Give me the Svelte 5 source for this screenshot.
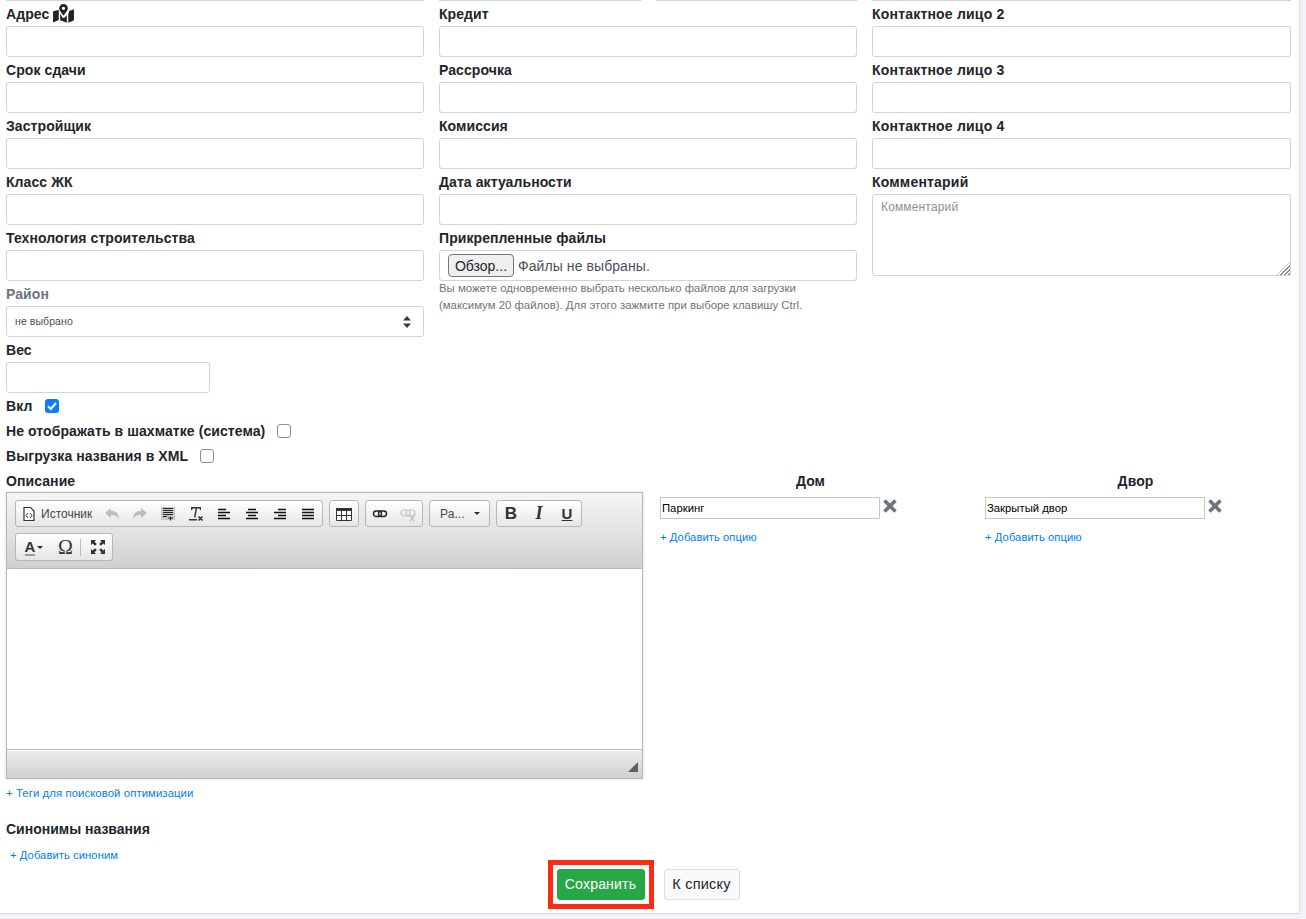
<script>
  const col1 = ['Срок сдачи', 'Застройщик', 'Класс ЖК', 'Технология строительства']
  const col2 = ['Рассрочка', 'Комиссия', 'Дата актуальности']
  const col3 = ['Контактное лицо 2', 'Контактное лицо 3', 'Контактное лицо 4']
  const options = [
    { title: 'Дом', value: 'Паркинг' },
    { title: 'Двор', value: 'Закрытый двор' }
  ]
</script>

<div class="page">
  <div class="card">
    <div class="top-edge">
      <i></i>
      <div class="split"><i></i><i></i></div>
      <i></i>
    </div>

    <div class="fields">
      <div class="col">
        <div class="field">
          <label for="addr">Адрес
            <svg class="map-icon" viewBox="0 0 22 20" width="21" height="19">
              <path fill="#212529" d="M11 0a4.6 4.6 0 0 0-4.6 4.6c0 2.1 2.9 5.6 4 6.9.3.3.9.3 1.2 0 1.1-1.3 4-4.8 4-6.9A4.6 4.6 0 0 0 11 0zm0 6.3a1.7 1.7 0 1 1 0-3.4 1.7 1.7 0 0 1 0 3.4z" />
              <path fill="#212529" d="M0 8.2v11.3l6-2.6V6.3L1 7.3c-.6.2-1 .4-1 .9zM7.5 10v7l7 2.800v-8l-2.300 2.400c-.7.6-1.700.6-2.400 0zM16 10.700v9.100l5.200-2.300c.5-.2.800-.5.800-1V5.500l-5 1.900z" />
            </svg>
          </label>
          <input id="addr" type="text" />
        </div>
        {#each col1 as name}
          <div class="field">
            <label for={name}>{name}</label>
            <input id={name} type="text" />
          </div>
        {/each}
        <div class="field">
          <label class="muted" for="district">Район</label>
          <div class="select" id="district">
            <span>не выбрано</span>
            <svg viewBox="0 0 8 12" width="8" height="12"><path fill="#343a40" d="M4 0 8 4.500H0zM4 12 0 7.500h8z" /></svg>
          </div>
        </div>
        <div class="field">
          <label for="weight">Вес</label>
          <input id="weight" class="short" type="text" />
        </div>
        <div class="check-row">
          <b>Вкл</b>
          <span class="box on">
            <svg viewBox="0 0 14 14" width="14" height="14"><path d="M3 7.300 5.800 10 11 4" fill="none" stroke="#fff" stroke-width="2" /></svg>
          </span>
        </div>
        <div class="check-row"><b>Не отображать в шахматке (система)</b><span class="box"></span></div>
        <div class="check-row"><b>Выгрузка названия в XML</b><span class="box"></span></div>
      </div>

      <div class="col">
        <div class="field">
          <label for="credit">Кредит</label>
          <input id="credit" type="text" />
        </div>
        {#each col2 as name}
          <div class="field">
            <label for={name}>{name}</label>
            <input id={name} type="text" />
          </div>
        {/each}
        <div class="field">
          <label for="files">Прикрепленные файлы</label>
          <div class="file" id="files">
            <button type="button">Обзор...</button>
            <span>Файлы не выбраны.</span>
          </div>
          <p class="hint">Вы можете одновременно выбрать несколько файлов для загрузки (максимум 20 файлов). Для этого зажмите при выборе клавишу Ctrl.</p>
        </div>
      </div>

      <div class="col contacts">
        {#each col3 as name}
          <div class="field">
            <label for={name}>{name}</label>
            <input id={name} type="text" />
          </div>
        {/each}
        <div class="field">
          <label for="note">Комментарий</label>
          <div class="note-wrap">
            <textarea id="note" placeholder="Комментарий"></textarea>
          </div>
        </div>
      </div>
    </div>

    <div class="lower">
      <div class="descr">
        <div class="descr-label"><b>Описание</b></div>
        <div class="editor">
          <div class="toolbar">
            <div class="tools">
              <div class="group">
                <span class="src">
                  <svg viewBox="0 0 16 16" width="16" height="16">
                    <path fill="#fff" stroke="#333" stroke-width="1.2" d="M3 1.500h6.500L13 5v9.500H3z" />
                    <path fill="none" stroke="#333" d="M7 7 5 9.500 7 12M9 7l2 2.500L9 12" />
                  </svg>
                  Источник
                </span>
                <span class="tool off"><svg viewBox="0 0 16 16" width="16" height="16"><path fill="#474747" d="M1 7l6-5v3c5 0 8 2.500 8 8-1.500-3-4-4-8-4v3z" /></svg></span>
                <span class="tool off"><svg viewBox="0 0 16 16" width="16" height="16"><path fill="#474747" d="M15 7 9 2v3c-5 0-8 2.500-8 8 1.500-3 4-4 8-4v3z" /></svg></span>
                <span class="tool"><svg viewBox="0 0 16 16" width="16" height="16"><path fill="#c8c8c8" d="M1 1h14v13H1z" /><path stroke="#222" d="M3 2.500h10M3 4.500h10M3 6.500h10M3 8.500h10M3 10.500h4M8 12h5M10.500 10.500v4" /></svg></span>
                <span class="tool"><svg viewBox="0 0 16 16" width="16" height="16"><path fill="#333" d="M3 1h10v3h-1l-.5-1.500H9L7.500 11.500H6L7.500 2.500H5L4 4H3zM1 13h8v1.500H1z" /><path stroke="#333" stroke-width="1.6" d="m10.500 10.500 4 4m0-4-4 4" /></svg></span>
                <span class="tool"><svg viewBox="0 0 16 16" width="16" height="16"><path stroke="#111" stroke-width="1.3" d="M2 3.500h8M2 6.500h12M2 9.500h8M2 12.500h12" /></svg></span>
                <span class="tool"><svg viewBox="0 0 16 16" width="16" height="16"><path stroke="#111" stroke-width="1.3" d="M4 3.500h8M2 6.500h12M4 9.500h8M2 12.500h12" /></svg></span>
                <span class="tool"><svg viewBox="0 0 16 16" width="16" height="16"><path stroke="#111" stroke-width="1.3" d="M6 3.500h8M2 6.500h12M6 9.500h8M2 12.500h12" /></svg></span>
                <span class="tool"><svg viewBox="0 0 16 16" width="16" height="16"><path stroke="#111" stroke-width="1.3" d="M2 3.500h12M2 6.500h12M2 9.500h12M2 12.500h12" /></svg></span>
              </div>
              <div class="group">
                <span class="tool"><svg viewBox="0 0 16 16" width="16" height="16"><path fill="#fff" stroke="#333" d="M.5 2.500h15v12H.5z" /><path fill="#333" d="M0 2h16v3H0z" /><path stroke="#333" d="M5.500 5v9M10.500 5v9M1 9.500h14" /></svg></span>
              </div>
              <div class="group">
                <span class="tool"><svg viewBox="0 0 16 16" width="16" height="16"><g fill="none" stroke="#222" stroke-width="1.4"><rect x="1.500" y="5" width="8" height="5.500" rx="2.700" /><rect x="6.500" y="5" width="8" height="5.500" rx="2.700" /></g></svg></span>
                <span class="tool off"><svg viewBox="0 0 16 16" width="16" height="16"><g fill="none" stroke="#555" stroke-width="1.2"><rect x="1" y="4" width="9" height="6" rx="3" /><rect x="6" y="4" width="9" height="6" rx="3" /><path d="m10 10 4.500 5m0-5L10 15" /></g></svg></span>
              </div>
              <div class="group combo"><span>Ра...</span><i class="caret"></i></div>
              <div class="group">
                <span class="tool fmt bold">B</span>
                <span class="tool fmt ital">I</span>
                <span class="tool fmt under">U</span>
              </div>
            </div>
            <div class="tools">
              <div class="group">
                <span class="tool color"><span>A</span><i class="caret"></i></span>
                <span class="tool fmt omega">Ω</span>
                <span class="sep"></span>
                <span class="tool"><svg viewBox="0 0 16 16" width="16" height="16"><path fill="#333" d="M1 1h5L4.500 2.700 6.800 5 5 6.800 2.700 4.500 1 6zM15 1v5l-1.700-1.500L11 6.800 9.200 5l2.300-2.300L10 1zM1 15v-5l1.700 1.500L5 9.200 6.800 11l-2.300 2.300L6 15zM15 15h-5l1.500-1.700L9.200 11l1.800-1.800 2.300 2.300L15 10z" /></svg></span>
              </div>
            </div>
          </div>
          <div class="content"></div>
          <div class="bottom"><i class="grip"></i></div>
        </div>
        <a class="link tags" href="#tags">+ Теги для поисковой оптимизации</a>
      </div>

      {#each options as opt}
        <div class="opt">
          <div class="opt-title"><b>{opt.title}</b></div>
          <div class="opt-row">
            <input type="text" value={opt.value} />
            <svg viewBox="0 0 14 14" width="14" height="14"><path stroke="#6c757d" stroke-width="3.6" d="m1.500 1.500 11 11m0-11-11 11" /></svg>
          </div>
          <a class="link" href="#add">+ Добавить опцию</a>
        </div>
      {/each}
    </div>

    <div class="syn"><b>Синонимы названия</b></div>
    <a class="link syn-add" href="#syn">+ Добавить синоним</a>

    <div class="actions">
      <div class="mark"><button class="save" type="button">Сохранить</button></div>
      <button class="back" type="button">К списку</button>
    </div>
  </div>
</div>

<style>
  :global(body) {
    margin: 0;
    background: #f1f3f8;
  }
  .page {
    height: 919px;
    overflow: hidden;
    font-family: "Liberation Sans", Arial, sans-serif;
    font-size: 14px;
    letter-spacing: 0.08px;
    color: #212529;
  }
  .card {
    width: 1299px;
    height: 913px;
    box-sizing: border-box;
    padding: 0 8px 0 6px;
    background: #fff;
    box-shadow: 0 0 2px rgba(0, 0, 0, 0.3);
  }
  .top-edge {
    display: grid;
    grid-template-columns: 418px 418px 419px;
    gap: 15px;
    height: 1px;
  }
  .top-edge i {
    display: block;
    height: 1px;
    background: #ced4da;
  }
  .split {
    display: flex;
    gap: 15px;
  }
  .split i {
    flex: 1;
  }
  .fields {
    display: grid;
    grid-template-columns: 418px 418px 419px;
    gap: 15px;
    height: 467px;
  }
  .field {
    height: 56px;
  }
  .field label {
    display: block;
    height: 25px;
    line-height: 21px;
    font-weight: 700;
    box-sizing: border-box;
    padding-top: 3px;
  }
  .contacts label {
    letter-spacing: 0.2px;
  }
  .muted {
    color: #6c757d;
  }
  .map-icon {
    vertical-align: -4px;
    margin-top: -4px;
  }
  input {
    font-family: inherit;
  }
  .field input {
    display: block;
    width: 100%;
    height: 31px;
    box-sizing: border-box;
    border: 1px solid #ced4da;
    border-radius: 3px;
    background: #fff;
    padding: 4px 8px;
  }
  .field input.short {
    width: 204px;
  }
  .select {
    height: 31px;
    box-sizing: border-box;
    border: 1px solid #ced4da;
    border-radius: 3px;
    display: flex;
    align-items: center;
    justify-content: space-between;
    padding: 0 12px 2px 8px;
    font-size: 10.5px;
    color: #495057;
  }
  .select svg {
    margin-top: 2px;
  }
  .check-row {
    height: 25px;
    display: flex;
    align-items: center;
    gap: 12px;
    line-height: 21px;
  }
  .check-row b {
    margin-top: 2px;
  }
  .box {
    width: 14px;
    height: 14px;
    box-sizing: border-box;
    border: 1px solid #8a8f94;
    border-radius: 3px;
    background: #fff;
    display: block;
  }
  .box.on {
    border: 0;
    margin-left: 1px;
    background: #0a7cff;
  }
  .box svg {
    display: block;
  }
  .file {
    height: 31px;
    box-sizing: border-box;
    border: 1px solid #ced4da;
    border-radius: 3px;
    display: flex;
    align-items: center;
    gap: 4px;
    padding-left: 8px;
    color: #495057;
  }
  .file button {
    height: 23px;
    width: 66px;
    padding: 0;
    font: 14px "Liberation Sans", Arial, sans-serif;
    color: #212529;
    background: #efefef;
    border: 1px solid #767676;
    border-radius: 4px;
  }
  .hint {
    margin: -1px 0 0;
    font-size: 11.4px;
    line-height: 17px;
    letter-spacing: 0;
    color: #6c757d;
    width: 370px;
  }
  .note-wrap {
    height: 82px;
    position: relative;
  }
  .note-wrap::after {
    content: '';
    position: absolute;
    right: 1px;
    bottom: 1px;
    width: 13px;
    height: 13px;
    background: repeating-linear-gradient(135deg, #8d8d8d 0 1px, #fff 1px 2.8px);
    clip-path: polygon(100% 0, 100% 100%, 0 100%);
  }
  textarea {
    display: block;
    width: 100%;
    height: 82px;
    box-sizing: border-box;
    border: 1px solid #ced4da;
    border-radius: 3px;
    padding: 4px 8px;
    font: 12px/16px "Liberation Sans", Arial, sans-serif;
    letter-spacing: 0.15px;
    resize: none;
  }
  textarea::placeholder {
    color: #8a9199;
    opacity: 1;
  }
  .lower {
    display: flex;
    height: 337px;
  }
  .descr {
    width: 637px;
    flex: none;
    margin-right: 5px;
  }
  .descr-label {
    height: 24px;
    line-height: 21px;
    padding-top: 3px;
    box-sizing: border-box;
  }
  .editor {
    height: 287px;
    box-sizing: border-box;
    border: 1px solid #b6b6b6;
    display: flex;
    flex-direction: column;
    box-shadow: 0 0 3px rgba(0, 0, 0, 0.15);
  }
  .toolbar {
    height: 76px;
    flex: none;
    box-sizing: border-box;
    padding: 7px 8px 0;
    background: linear-gradient(#f5f5f5, #cfd1cf);
    border-bottom: 1px solid #b6b6b6;
  }
  .tools {
    display: flex;
    gap: 6px;
    height: 27px;
    margin-bottom: 6px;
  }
  .group {
    display: flex;
    align-items: center;
    height: 27px;
    box-sizing: border-box;
    border: 1px solid #b6b6b6;
    border-radius: 3px;
    background: linear-gradient(#fff, #e6e6e6);
  }
  .tools + .tools .group {
    height: 28px;
  }
  .tool {
    width: 28px;
    height: 25px;
    display: flex;
    align-items: center;
    justify-content: center;
  }
  .tool svg,
  .src svg {
    display: block;
  }
  .off {
    opacity: 0.3;
  }
  .src {
    display: flex;
    align-items: center;
    gap: 4px;
    width: 82px;
    font-size: 12px;
    letter-spacing: 0;
    color: #474747;
    padding-left: 5px;
    box-sizing: border-box;
  }
  .sep {
    width: 1px;
    height: 17px;
    margin-right: 3px;
    background: #bcbcbc;
  }
  .combo {
    width: 61px;
    justify-content: space-between;
    padding: 0 9px 0 10px;
    font-size: 12px;
    color: #484848;
  }
  .caret {
    display: block;
    width: 0;
    height: 0;
    border: 3px solid transparent;
    border-top-color: #2f2f2f;
    border-bottom: 0;
  }
  .fmt {
    color: #333;
  }
  .bold {
    font-family: "Liberation Sans", sans-serif;
    font-size: 17px;
    font-weight: 700;
  }
  .ital {
    font-family: "Liberation Serif", serif;
    font-size: 18px;
    font-style: italic;
    font-weight: 700;
  }
  .under {
    font-size: 15px;
    text-decoration: underline;
    font-weight: 700;
  }
  .omega {
    font-family: "Liberation Serif", serif;
    font-size: 20px;
    width: 29px;
  }
  .color {
    gap: 2px;
    width: 35px;
    color: #333;
    font-weight: 700;
    font-size: 15px;
    padding-left: 1px;
    box-sizing: border-box;
  }
  .color span {
    border-bottom: 2px solid #999;
    line-height: 15px;
  }
  .content {
    flex: 1;
    background: #fff;
  }
  .bottom {
    height: 29px;
    flex: none;
    position: relative;
    box-sizing: border-box;
    border-top: 1px solid #b6b6b6;
    background: linear-gradient(#ebebeb, #cfd1cf);
    box-shadow: inset 0 1px 0 #fff;
  }
  .grip {
    position: absolute;
    right: 4px;
    bottom: 6px;
    width: 0;
    height: 0;
    border-left: 10px solid transparent;
    border-bottom: 10px solid #5f5f5f;
  }
  .link {
    color: #007bff;
    text-decoration: none;
    font-size: 11.2px;
    line-height: 16px;
    display: block;
  }
  .tags {
    margin-top: 6px;
    font-size: 11.35px;
  }
  .opt {
    width: 325px;
    flex: none;
    box-sizing: border-box;
    padding: 0 12px;
  }
  .opt-title {
    height: 29px;
    line-height: 21px;
    padding-top: 3px;
    box-sizing: border-box;
    text-align: center;
  }
  .opt-row {
    display: flex;
    align-items: center;
    gap: 3px;
    height: 22px;
    margin-bottom: 10px;
  }
  .opt-row input {
    width: 220px;
    height: 22px;
    box-sizing: border-box;
    border: 1px solid #c8c8c8;
    padding: 0 1px;
    font-size: 11.3px;
    color: #000;
  }
  .opt-row svg {
    margin-bottom: 5px;
  }
  .syn {
    height: 28px;
    line-height: 21px;
    margin-top: 14px;
    letter-spacing: 0;
  }
  .syn-add {
    margin-left: 4px;
  }
  .actions {
    display: flex;
    justify-content: center;
    gap: 10px;
    align-items: center;
    margin-top: -3px;
    padding-right: 10px;
  }
  .mark {
    border: 5px solid #ff2a12;
    padding: 4px;
  }
  .mark .save {
    display: block;
  }
  .save,
  .back {
    height: 31px;
    padding: 0 0 2px;
    font: 14px "Liberation Sans", Arial, sans-serif;
    border-radius: 3px;
  }
  .save {
    width: 88px;
    letter-spacing: 0.2px;
    color: #fff;
    background: #28a745;
    border: 1px solid #28a745;
  }
  .back {
    width: 76px;
    font-size: 14.5px;
    letter-spacing: 0.2px;
    color: #212529;
    background: #f8f9fa;
    border: 1px solid #dde0e3;
  }
</style>
